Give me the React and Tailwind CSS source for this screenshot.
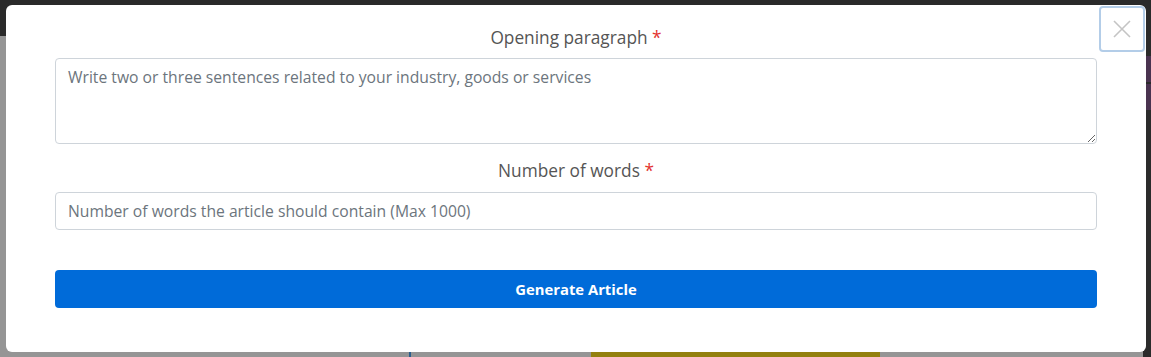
import React from 'react'

export default function App() {
  return (
    <div className="relative h-[357px] w-[1151px] overflow-hidden font-['Open_Sans',sans-serif]">
      {/* dimmed page behind the modal */}
      <div className="flex h-full flex-col">
        <div className="h-[36px] bg-[#2a2a2a]" />
        <div className="flex flex-1">
          <div className="flex flex-1 flex-col bg-[#959595]">
            <div className="flex-1" />
            <div className="flex h-[6px]">
              <div className="w-[409px]" />
              <div className="w-[2px] bg-[#2b5f8e]" />
              <div className="w-[180px]" />
              <div className="w-[289px] bg-[#93800f]" />
            </div>
          </div>
          <div className="flex w-[8px] flex-col gap-[2px] bg-[#2b2b2b] pt-[20px]">
            <div className="h-[26px] bg-[#4a3350]" />
            <div className="h-[26px] bg-[#4a3350]" />
          </div>
        </div>
      </div>

      {/* modal */}
      <div className="absolute left-[6px] top-[5px] flex h-[347px] w-[1140px] flex-col rounded-[6px] bg-white px-[49px] pt-[21px]">
        <button className="absolute right-[1px] top-[1px] flex h-[46px] w-[46px] items-center justify-center rounded-[4px] border-2 border-[#b3cde8] bg-white">
          <svg width="20" height="20" viewBox="0 0 20 20" stroke="#c4c4c4" strokeWidth="1.6">
            <path d="M2 2 L18 18 M18 2 L2 18" />
          </svg>
        </button>

        <label className="text-center text-[17.3px] leading-[24px] text-[#555]">
          Opening paragraph <span className="text-[#e3342f]">*</span>
        </label>
        <textarea
          className="mt-[8px] h-[86px] w-full rounded-[4px] border border-[#ced4da] px-[12px] py-[6px] text-[15.7px] leading-[24px] text-[#495057] placeholder:text-[#6c757d] focus:outline-none"
          placeholder="Write two or three sentences related to your industry, goods or services"
        />

        <label className="mt-[15px] text-center text-[17.3px] leading-[24px] text-[#555]">
          Number of words <span className="text-[#e3342f]">*</span>
        </label>
        <input
          className="mt-[9px] h-[38px] w-full rounded-[4px] border border-[#ced4da] px-[12px] text-[15.7px] text-[#495057] placeholder:text-[#6c757d] focus:outline-none"
          placeholder="Number of words the article should contain (Max 1000)"
        />

        <button className="mt-[40px] h-[38px] w-full rounded-[4px] bg-[#006bd9] text-[14.8px] font-bold text-white">
          Generate Article
        </button>
      </div>
    </div>
  )
}
